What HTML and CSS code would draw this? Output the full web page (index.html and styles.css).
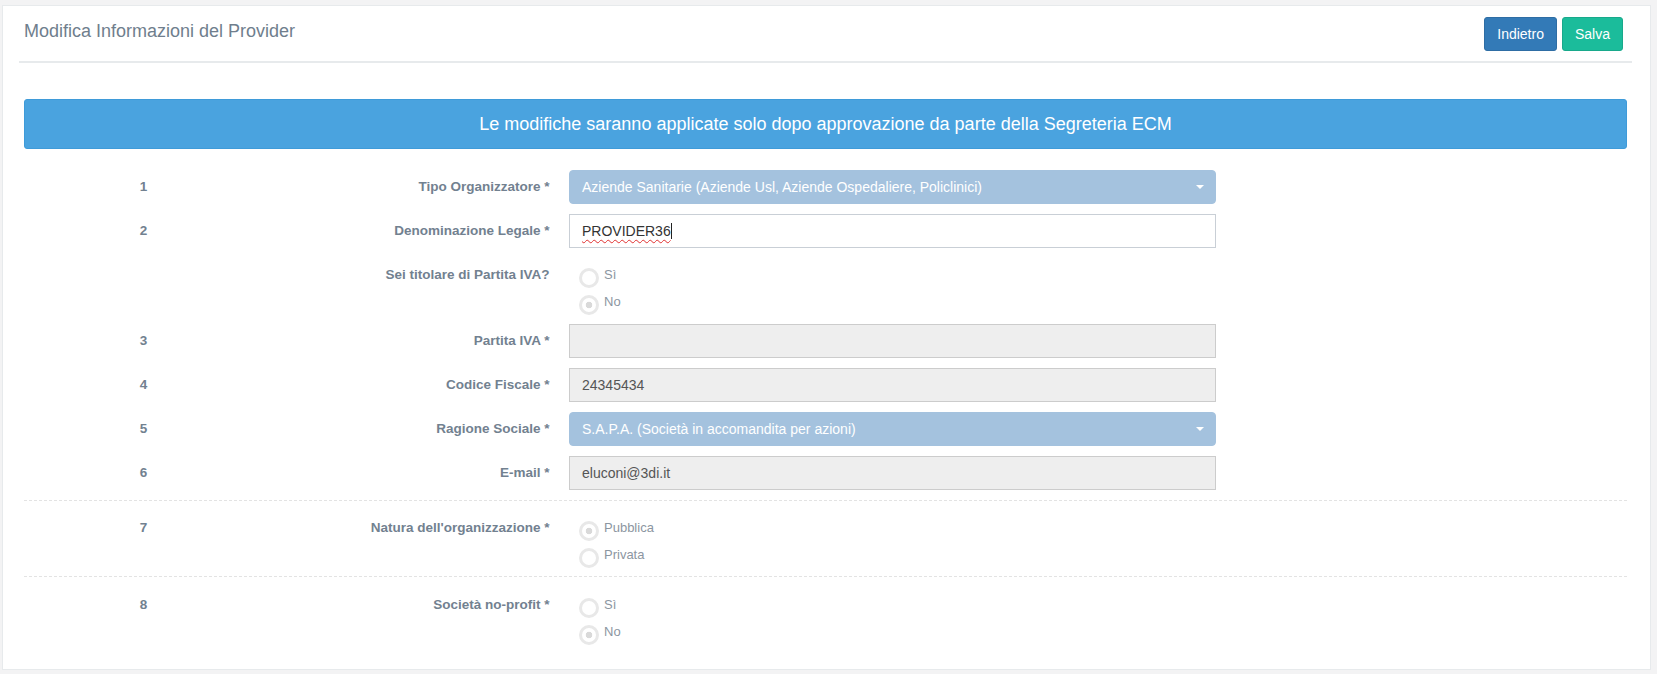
FILE: index.html
```html
<!DOCTYPE html>
<html lang="it">
<head>
<meta charset="utf-8">
<title>Modifica Informazioni del Provider</title>
<link rel="stylesheet" href="styles.css">
</head>
<body>
<div class="panel">
  <div class="panel-head">
    <h2 class="title">Modifica Informazioni del Provider</h2>
    <div class="actions">
      <button class="btn btn-primary">Indietro</button>
      <button class="btn btn-success">Salva</button>
    </div>
  </div>
  <div class="panel-body">
    <div class="alert">Le modifiche saranno applicate solo dopo approvazione da parte della Segreteria ECM</div>

    <div class="section first">
      <div class="row">
        <div class="num">1</div>
        <div class="lbl">Tipo Organizzatore *</div>
        <div class="control select"><span>Aziende Sanitarie (Aziende Usl, Aziende Ospedaliere, Policlinici)</span><span class="caret"></span></div>
      </div>
      <div class="row">
        <div class="num">2</div>
        <div class="lbl">Denominazione Legale *</div>
        <div class="control input"><span class="spell">PROVIDER36</span><span class="cursor"></span></div>
      </div>
      <div class="row radio-row first-radio">
        <div class="num"></div>
        <div class="lbl">Sei titolare di Partita IVA?</div>
        <div class="radios">
          <div class="radio"><span class="dot"></span><span>Sì</span></div>
          <div class="radio"><span class="dot on"></span><span>No</span></div>
        </div>
      </div>
      <div class="row">
        <div class="num">3</div>
        <div class="lbl">Partita IVA *</div>
        <div class="control readonly"></div>
      </div>
      <div class="row">
        <div class="num">4</div>
        <div class="lbl">Codice Fiscale *</div>
        <div class="control readonly">24345434</div>
      </div>
      <div class="row">
        <div class="num">5</div>
        <div class="lbl">Ragione Sociale *</div>
        <div class="control select"><span>S.A.P.A. (Società in accomandita per azioni)</span><span class="caret"></span></div>
      </div>
      <div class="row">
        <div class="num">6</div>
        <div class="lbl">E-mail *</div>
        <div class="control readonly">eluconi@3di.it</div>
      </div>
    </div>

    <div class="section second">
      <div class="row radio-row">
        <div class="num">7</div>
        <div class="lbl">Natura dell'organizzazione *</div>
        <div class="radios">
          <div class="radio"><span class="dot on"></span><span>Pubblica</span></div>
          <div class="radio"><span class="dot"></span><span>Privata</span></div>
        </div>
      </div>
    </div>

    <div class="section third">
      <div class="row radio-row">
        <div class="num">8</div>
        <div class="lbl">Società no-profit *</div>
        <div class="radios">
          <div class="radio"><span class="dot"></span><span>Sì</span></div>
          <div class="radio"><span class="dot on"></span><span>No</span></div>
        </div>
      </div>
    </div>
  </div>
</div>
</body>
</html>
```

FILE: styles.css
```css
html, body {
  margin: 0;
}

body {
  padding: 5px 6px 0 2px;
  background: #f3f3f4;
  font-family: "Liberation Sans", Arial, sans-serif;
}

.panel {
  background: #ffffff;
  border: 1px solid #e7eaec;
  padding: 0 18px 20px 16px;
}

.panel-head {
  display: flex;
  justify-content: space-between;
  align-items: flex-start;
  padding: 11px 9px 10px 5px;
  border-bottom: 2px solid #e7eaec;
}

.title {
  margin: 4px 0 0;
  font-size: 18px;
  line-height: 20px;
  font-weight: normal;
  color: #6f7e8d;
}

.actions {
  display: flex;
  gap: 5px;
}

.btn {
  font-family: "Liberation Sans", Arial, sans-serif;
  font-size: 14px;
  line-height: 20px;
  padding: 6px 12px;
  border: 1px solid transparent;
  border-radius: 3px;
  color: #ffffff;
}

.btn-primary {
  background: #337ab7;
  border-color: #2e6da4;
}

.btn-success {
  background: #1bbc9b;
  border-color: #18a98b;
}

.panel-body {
  padding: 36px 5px 0;
}

.alert {
  background: #4aa3df;
  border: 1px solid #3f9bd9;
  border-radius: 3px;
  color: #ffffff;
  font-size: 18px;
  line-height: 20px;
  padding: 14px;
  text-align: center;
}

.section.first {
  margin-top: 21px;
  border-bottom: 1px dashed #e3e3e3;
}

.section.second {
  padding: 17px 0 4px;
  border-bottom: 1px dashed #e3e3e3;
}

.section.third {
  padding-top: 18px;
}

.row {
  display: grid;
  grid-template-columns: 239px 306px 647px;
  margin-bottom: 10px;
}

.section.second .row,
.section.third .row {
  margin-bottom: 0;
}

.num,
.lbl {
  font-size: 13.5px;
  font-weight: bold;
  line-height: 34px;
  color: #728190;
}

.num {
  text-align: center;
}

.lbl {
  text-align: right;
  white-space: nowrap;
  padding-right: 19.5px;
}

.control {
  box-sizing: border-box;
  height: 34px;
  border: 1px solid #cccccc;
  padding: 0 12px;
  display: flex;
  align-items: center;
  font-size: 14px;
}

.select {
  background: #a4c2de;
  border-color: #a4c2de;
  border-radius: 4px;
  color: #ffffff;
  justify-content: space-between;
  padding-right: 11px;
}

.caret {
  width: 0;
  height: 0;
  border-left: 4px solid transparent;
  border-right: 4px solid transparent;
  border-top: 4px solid #ffffff;
}

.input {
  background: #ffffff;
  border-color: #c9cfd6;
  color: #333333;
}

.spell {
  text-decoration: underline wavy #e03030;
  text-decoration-thickness: 1px;
  text-underline-offset: 3px;
}

.cursor {
  width: 0;
  height: 16px;
  border-left: 1px solid #222222;
}

.readonly {
  background: #eeeeee;
  border-color: #cccccc;
  color: #555555;
}

.radio-row .num,
.radio-row .lbl {
  line-height: 20px;
}

.row.first-radio {
  padding-top: 7px;
  margin-bottom: 5px;
}

.radios {
  display: flex;
  flex-direction: column;
  padding-left: 10px;
}

.radio {
  display: flex;
  align-items: flex-start;
  gap: 5px;
  height: 27px;
  font-size: 13px;
  line-height: 20px;
  color: #8c96a1;
}

.dot {
  box-sizing: border-box;
  width: 20px;
  height: 20px;
  margin-top: 3px;
  border: 3px solid #e8e8e8;
  border-radius: 50%;
  background: #ffffff;
}

.dot.on {
  background: radial-gradient(circle at center, #d9d9d9 0 3px, #ffffff 3.6px);
}
```
